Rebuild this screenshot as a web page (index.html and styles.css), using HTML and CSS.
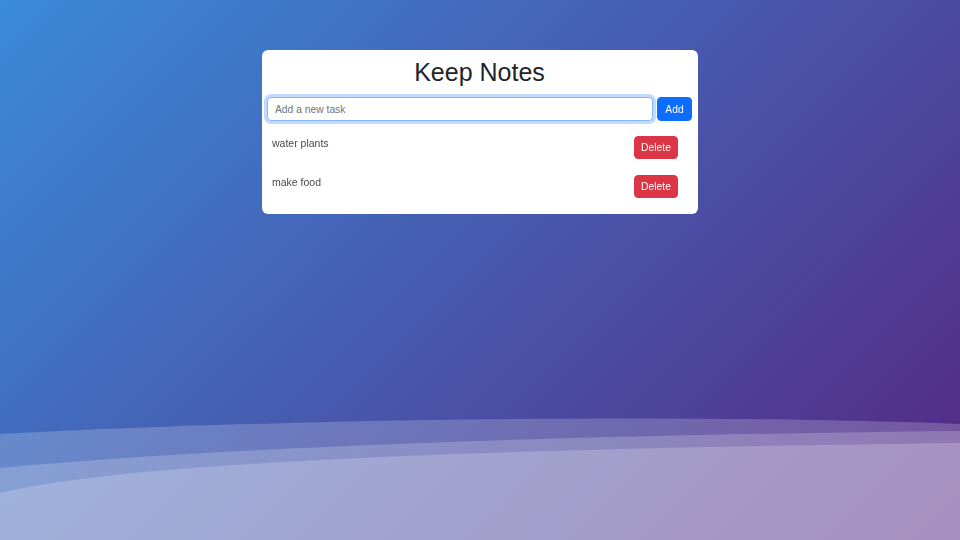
FILE: index.html
```html
<!DOCTYPE html>
<html lang="en">
<head>
<meta charset="utf-8">
<title>Keep Notes</title>
<link rel="stylesheet" href="styles.css">
</head>
<body>
<svg class="waves" viewBox="0 0 960 540" preserveAspectRatio="none" aria-hidden="true">
  <path d="M0 434 C300 418 700 414 960 424 L960 540 L0 540 Z" fill="#fff" fill-opacity="0.2"/>
  <path d="M0 468 C250 445 600 435 960 431 L960 540 L0 540 Z" fill="#fff" fill-opacity="0.2"/>
  <path d="M0 493 C120 465 400 450 960 443 L960 540 L0 540 Z" fill="#fff" fill-opacity="0.2"/>
</svg>
<main class="card">
  <h1 class="title">Keep Notes</h1>
  <form class="add-row">
    <input class="task-input" type="text" placeholder="Add a new task" autofocus>
    <button class="btn btn-add" type="button">Add</button>
  </form>
  <ul class="task-list">
    <li class="task"><span class="task-text">water plants</span><button class="btn btn-delete" type="button">Delete</button></li>
    <li class="task"><span class="task-text">make food</span><button class="btn btn-delete" type="button">Delete</button></li>
  </ul>
</main>
</body>
</html>
```

FILE: styles.css
```css
* { box-sizing: border-box; }
html, body { height: 100%; }
body {
  margin: 0;
  font-family: "Liberation Sans", Arial, sans-serif;
  background: linear-gradient(135deg, #3a8bd8 0%, #552682 100%);
  overflow: hidden;
  display: flex;
  flex-direction: column;
  align-items: center;
}
.waves {
  position: absolute;
  left: 0;
  top: 0;
  width: 960px;
  height: 540px;
  pointer-events: none;
}
.card {
  position: relative;
  margin-top: 50px;
  width: 436px;
  background: #fff;
  border-radius: 6px;
  padding: 7px 6px 8px 5px;
}
.title {
  margin: 0 0 10px;
  text-align: center;
  font-size: 25px;
  line-height: 30px;
  font-weight: 400;
  color: #212529;
}
.add-row {
  display: flex;
  gap: 4px;
  margin: 0;
}
.task-input {
  flex: 1;
  height: 24px;
  border: 1px solid #86b7fe;
  border-radius: 4px;
  padding: 0 7px;
  font-family: inherit;
  font-size: 10.3px;
  color: #212529;
  outline: none;
  box-shadow: 0 0 0 3px rgba(13, 110, 253, 0.25);
}
.task-input::placeholder { color: #6c757d; }
.btn {
  border: 1px solid transparent;
  border-radius: 4px;
  font-family: inherit;
  font-size: 10.3px;
  color: #fff;
  cursor: pointer;
}
.btn-add {
  width: 35px;
  height: 24px;
  padding: 0;
  background: #0d6efd;
  border-color: #0d6efd;
}
.task-list {
  list-style: none;
  margin: 7px 0 0;
  padding: 0;
}
.task {
  display: flex;
  justify-content: space-between;
  align-items: flex-start;
  padding: 8px 14px 8px 5px;
}
.task-text {
  font-size: 10.5px;
  line-height: 14px;
  color: #4a4a4a;
}
.btn-delete {
  width: 44px;
  height: 23px;
  padding: 0;
  background: #dc3545;
  border-color: #dc3545;
}
```
